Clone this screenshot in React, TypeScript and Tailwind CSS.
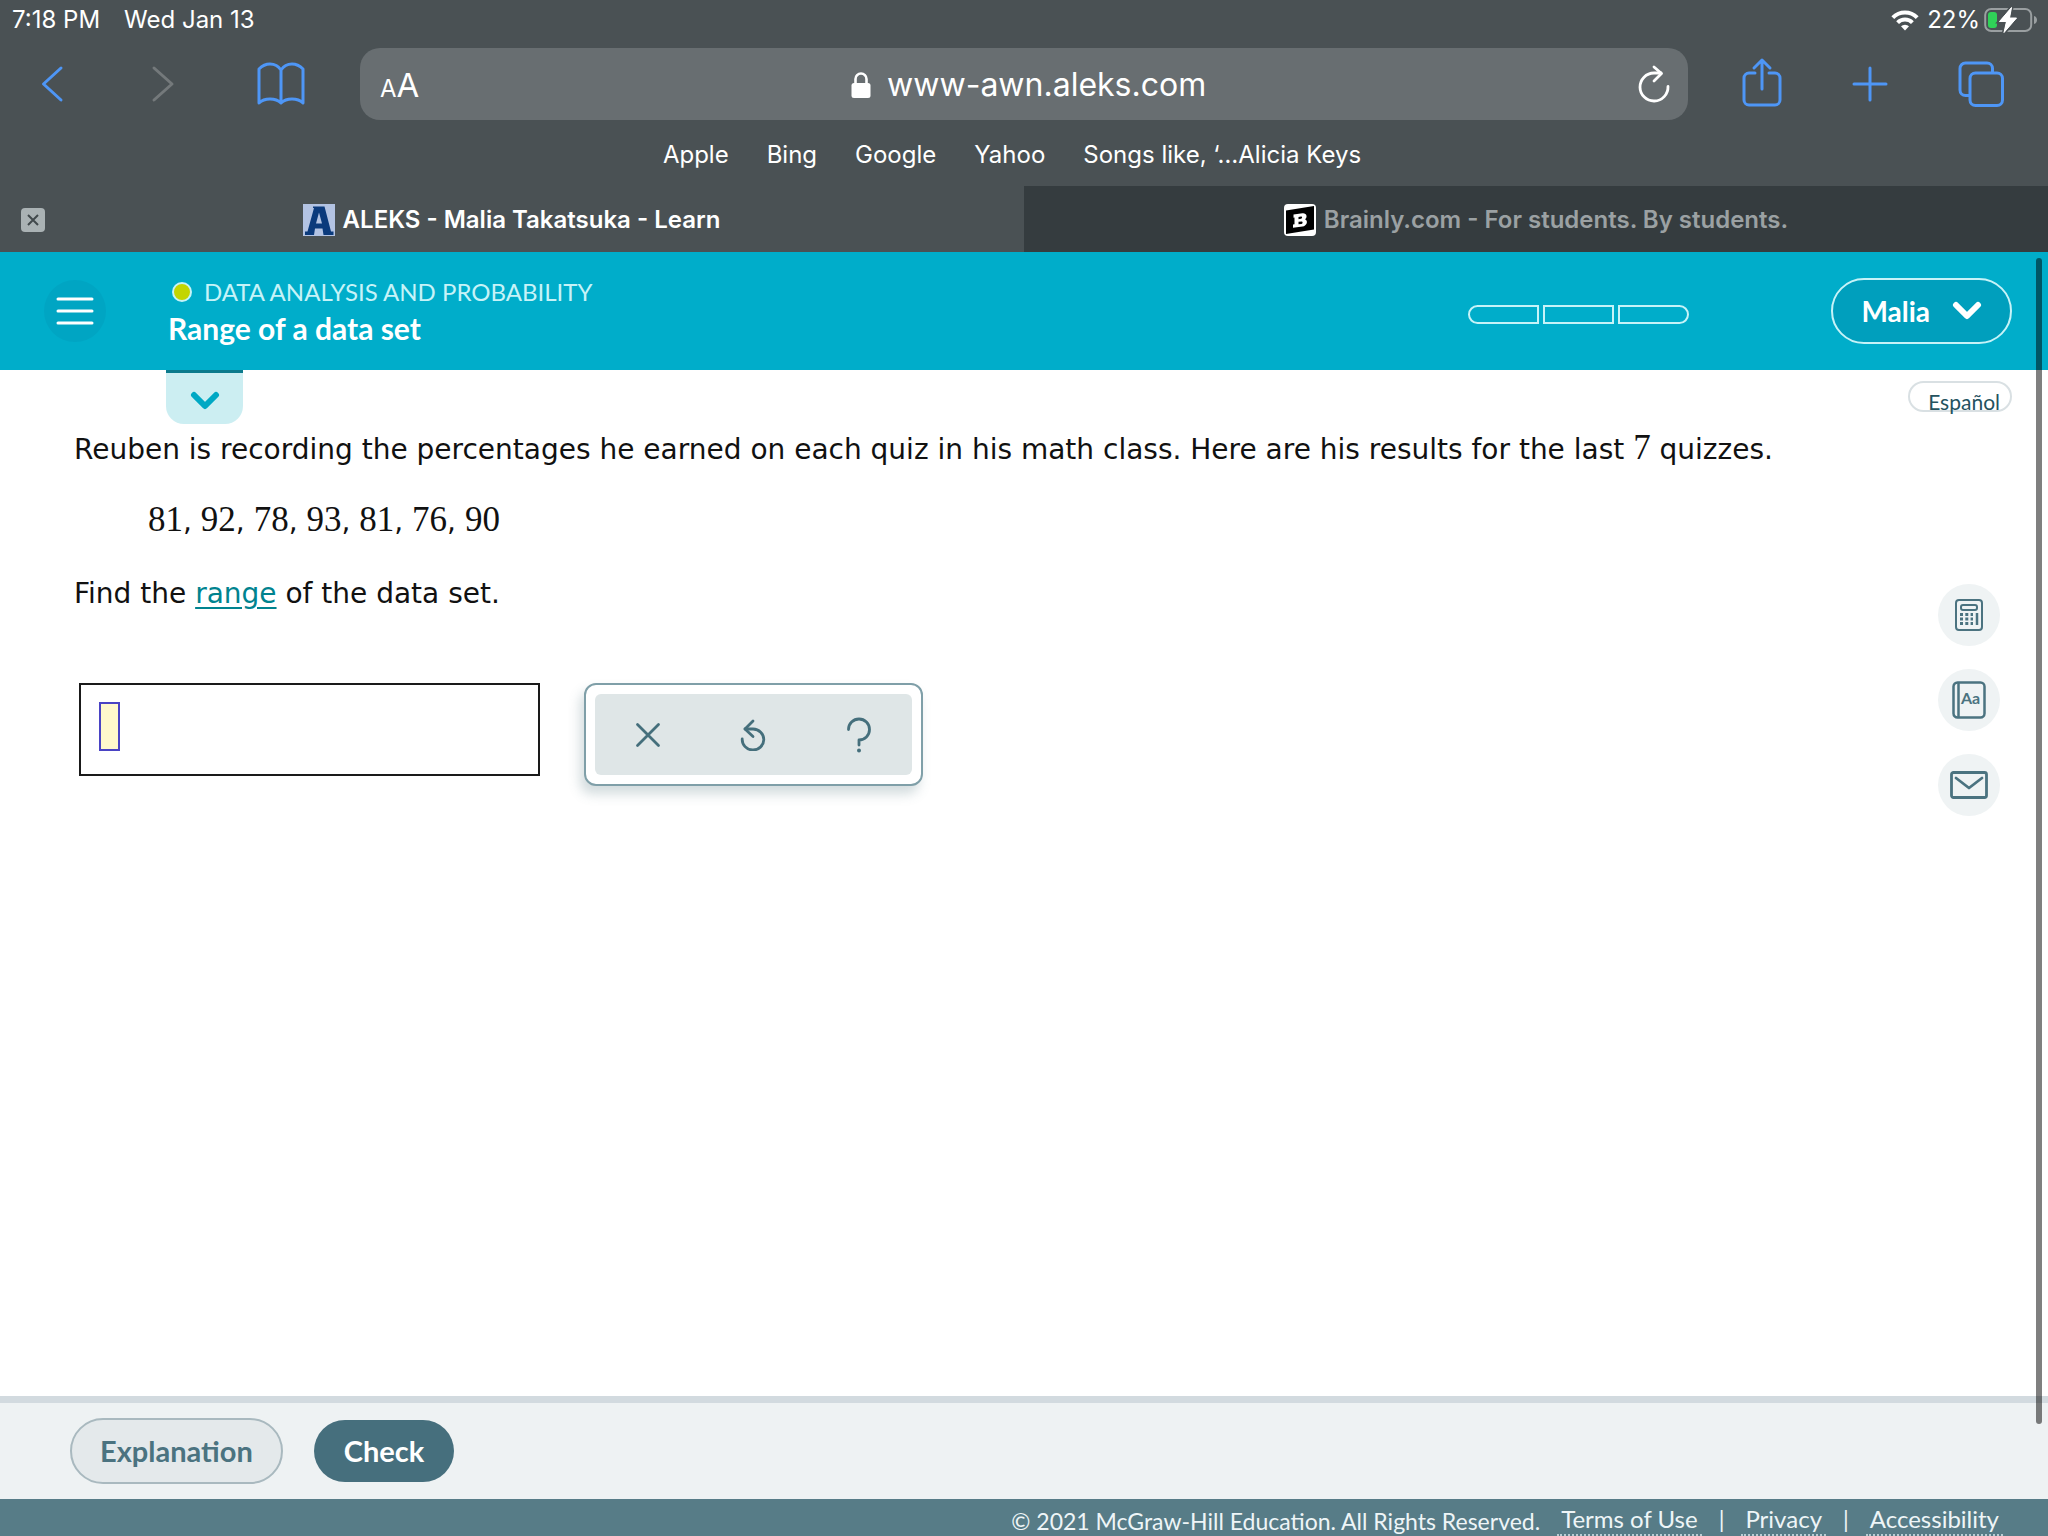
import React from 'react';

const bookmarks = ['Apple', 'Bing', 'Google', 'Yahoo', 'Songs like, ‘…Alicia Keys'];
const results = [81, 92, 78, 93, 81, 76, 90];

function StatusBar() {
  return (
    <div className="flex h-10 items-center justify-between pr-[10px] pl-3 text-2xl text-white">
      <div className="flex gap-6">
        <span>7:18 PM</span>
        <span>Wed Jan 13</span>
      </div>
      <div className="flex items-center gap-1">
        <svg className="mr-1" width="28" height="21" viewBox="0 0 28 21" fill="none" stroke="white" strokeWidth="4">
          <path d="M1.8 7.6a17.3 17.3 0 0 1 24.4 0" />
          <path d="M6.6 12.6a10.5 10.5 0 0 1 14.8 0" />
          <path d="M14 20.5l-4-4.2a5.8 5.8 0 0 1 8 0z" fill="white" stroke="none" />
        </svg>
        <span>22%</span>
        <svg width="54" height="26" viewBox="0 0 54 26" fill="none">
          <rect x="1.2" y="2" width="46" height="22" rx="6" stroke="#9a9fa1" strokeWidth="2" />
          <rect x="4" y="5" width="9" height="16" rx="3" fill="#30d158" />
          <path d="M50 9c4 1 4 7 0 8z" fill="#9a9fa1" />
          <path d="M27.500 0.500L15.500 14.500H22.500L20 25.500L32.500 11H25.500z" fill="white" stroke="#4a5154" strokeWidth="4" paintOrder="stroke" />
          <path d="M27.500 0.500L15.500 14.500H22.500L20 25.500L32.500 11H25.500z" fill="white" stroke="white" strokeWidth="1" strokeLinejoin="round" />
        </svg>
      </div>
    </div>
  );
}

function Toolbar() {
  return (
    <div className="flex h-[88px] items-center text-[#4e96f6]">
      <div className="flex w-[360px] shrink-0 items-center pl-10">
        <button aria-label="Back">
          <svg width="26" height="40" viewBox="0 0 26 40" fill="none" stroke="currentColor" strokeWidth="3" strokeLinecap="round" strokeLinejoin="round">
            <path d="M21 4L3.500 20L21 36" />
          </svg>
        </button>
        <button aria-label="Forward" className="ml-[84px] text-[#74797b]">
          <svg width="26" height="40" viewBox="0 0 26 40" fill="none" stroke="currentColor" strokeWidth="3" strokeLinecap="round" strokeLinejoin="round">
            <path d="M4 4L22 20L4 36" />
          </svg>
        </button>
        <button aria-label="Bookmarks" className="ml-[81px]">
          <svg width="48" height="44" viewBox="0 0 48 44" fill="none" stroke="currentColor" strokeWidth="3" strokeLinejoin="round">
            <path d="M24 8C21 3.500 17 2 13 2S5 4 2 7V41c3-3 6.500-4 11-4s8.500 1.500 11 4c2.500-2.500 6.500-4 11-4s8 1 11 4V7C43 4 39 2 35 2S27 3.500 24 8zV41" />
          </svg>
        </button>
      </div>

      <div className="flex h-[72px] flex-1 items-center justify-between rounded-[20px] bg-[#686e71] pr-[18px] pl-5 text-white">
        <button aria-label="Text size" className="flex items-baseline pt-1">
          <span className="text-2xl">A</span>
          <span className="text-[33px]">A</span>
        </button>
        <div className="flex items-center gap-4 pt-[2px]">
          <svg width="20" height="28" viewBox="0 0 20 28">
            <path d="M4.500 13V8a5.500 5.500 0 0 1 11 0v5" fill="none" stroke="white" strokeWidth="2.600" />
            <rect x="0.500" y="12" width="19" height="15" rx="2.500" fill="white" />
          </svg>
          <span className="text-[32px]">www-awn.aleks.com</span>
        </div>
        <button aria-label="Reload">
          <svg width="32" height="40" viewBox="0 0 32 40" fill="none" stroke="white" strokeWidth="2.800" strokeLinecap="round" strokeLinejoin="round">
            <path d="M30 22.500A14 14 0 1 1 16 9h7" />
            <path d="M16 3l7.500 6.500L16 17" />
          </svg>
        </button>
      </div>

      <div className="flex w-[360px] shrink-0 items-center justify-between pr-11 pl-[54px]">
        <button aria-label="Share" className="pb-1">
          <svg width="40" height="50" viewBox="0 0 40 50" fill="none" stroke="currentColor" strokeWidth="3" strokeLinecap="round" strokeLinejoin="round">
            <path d="M13 16H7a5 5 0 0 0-5 5V43a5 5 0 0 0 5 5H33a5 5 0 0 0 5-5V21a5 5 0 0 0-5-5H27" />
            <path d="M20 32V3M12 11l8-8 8 8" />
          </svg>
        </button>
        <button aria-label="New tab">
          <svg width="36" height="36" viewBox="0 0 36 36" stroke="currentColor" strokeWidth="3" strokeLinecap="round">
            <path d="M18 2V34M2 18H34" />
          </svg>
        </button>
        <button aria-label="All tabs">
          <svg width="46" height="46" viewBox="0 0 46 46" fill="none" stroke="currentColor" strokeWidth="3">
            <path d="M12 34.500H7.500a5.500 5.500 0 0 1-5.500-5.500V7.500A5.500 5.500 0 0 1 7.500 2H29a5.500 5.500 0 0 1 5.500 5.500V12" />
            <rect x="12" y="12" width="32.500" height="32.500" rx="5.500" />
          </svg>
        </button>
      </div>
    </div>
  );
}

function TabStrip() {
  return (
    <div className="grid h-[66px] grid-cols-2 text-2xl font-semibold">
      <div className="flex items-center pt-[2px] pr-5 pl-[21px]">
        <button aria-label="Close tab" className="flex h-6 w-6 items-center justify-center rounded-[4px] bg-[#aab2b4]">
          <svg width="12" height="12" viewBox="0 0 12 12" stroke="#41494c" strokeWidth="2">
            <path d="M1 1L11 11M11 1L1 11" />
          </svg>
        </button>
        <button className="flex flex-1 items-center justify-center gap-2 pr-[26px] text-white">
          <svg width="32" height="32" viewBox="0 0 32 32">
            <rect width="32" height="32" fill="#b3c3e3" />
            <path d="M2 31V27.500H4.500L11 4H10V2.500H21.500L28 27.500H30.500V31H20.500L19.500 24.500H12L11 31zM13 19.500H19L16 8.500z" fill="#0b3a7c" fillRule="evenodd" />
          </svg>
          ALEKS - Malia Takatsuka - Learn
        </button>
      </div>
      <button className="flex items-center justify-center gap-2 bg-[#353c3f] pt-[2px] text-[#9ba1a3]">
        <svg width="32" height="32" viewBox="0 0 32 32">
          <rect width="32" height="32" rx="4" fill="white" />
          <path d="M2 6.500L30 2V25.500L2 30z" fill="black" />
          <path d="M9.500 10.500l9-1.300c4-.5 5.500 3.800 2.500 6 3.500 1.500 2 6.700-2.500 7.300l-9.500 1.300V20.500l1.500-.3V13.600l-1 .1zM14.500 13v2.200l2.500-.4c1.500-.3 1.500-2.400 0-2.200zM14.500 17.800v2.500l3-.4c1.500-.3 1.500-2.700 0-2.500z" fill="white" fillRule="evenodd" />
        </svg>
        Brainly.com - For students. By students.
      </button>
    </div>
  );
}

function Browser() {
  return (
    <div className="bg-[#4a5154] font-['Inter',sans-serif]">
      <StatusBar />
      <Toolbar />
      <nav className="flex h-[58px] items-center justify-center gap-[38px] pr-6 pb-1 text-2xl text-white">
        {bookmarks.map((name) => (
          <a key={name} href="#">{name}</a>
        ))}
      </nav>
      <TabStrip />
    </div>
  );
}

function Chevron() {
  return (
    <svg width="30" height="20" viewBox="0 0 30 20" fill="none" stroke="currentColor" strokeWidth="6" strokeLinecap="round" strokeLinejoin="round">
      <path d="M4 4L15 15L26 4" />
    </svg>
  );
}

function LessonHeader() {
  return (
    <header className="flex h-[118px] items-center bg-[#00adca] pr-9 pl-11 text-white">
      <button aria-label="Menu" className="flex h-[62px] w-[62px] items-center justify-center rounded-full bg-[#00a5c3]">
        <svg width="38" height="30" viewBox="0 0 38 30" stroke="white" strokeWidth="3" strokeLinecap="round">
          <path d="M2 3H36M2 15H36M2 27H36" />
        </svg>
      </button>
      <div className="ml-[62px] flex-1 pt-[2px]">
        <div className="flex items-center gap-3 pl-1 text-2xl leading-8 text-[#c6f3f8]">
          <span className="h-5 w-5 rounded-full border-2 border-[#c6f3f8] bg-[#c3d500]" />
          DATA ANALYSIS AND PROBABILITY
        </div>
        <h1 className="text-[30px] leading-10 font-bold">Range of a data set</h1>
      </div>
      <div className="mt-[6px] mr-[142px] flex gap-1" role="img" aria-label="Progress 0 of 3">
        <span className="h-[19px] w-[71px] rounded-l-full border-2 border-[#c6f3f8]" />
        <span className="h-[19px] w-[71px] border-2 border-[#c6f3f8]" />
        <span className="h-[19px] w-[71px] rounded-r-full border-2 border-[#c6f3f8]" />
      </div>
      <button className="flex h-[66px] items-center gap-[22px] rounded-full border-2 border-[#c6f3f8] bg-[#009fbd] px-7 text-[28px] font-bold">
        Malia
        <Chevron />
      </button>
    </header>
  );
}

function SideTools() {
  const round = 'flex h-[62px] w-[62px] items-center justify-center rounded-full bg-[#eff3f4]';
  return (
    <div className="flex flex-col gap-[23px] text-[#4b7380]">
      <button aria-label="Calculator" className={round}>
        <svg width="28" height="32" viewBox="0 0 28 32" fill="none" stroke="currentColor" strokeWidth="2">
          <rect x="1" y="1" width="26" height="30" rx="3" />
          <rect x="6" y="6" width="16" height="5" rx="2" />
          <path d="M5 15.500h13M5 20h13M5 24.500h13" strokeWidth="3" strokeDasharray="3 2.300" />
          <path d="M22 14v12" strokeWidth="2.500" />
        </svg>
      </button>
      <button aria-label="Dictionary" className={round}>
        <svg width="34" height="38" viewBox="0 0 34 38" fill="none" stroke="currentColor" strokeWidth="2.500">
          <rect x="1.500" y="1.500" width="31" height="35" rx="4" />
          <path d="M6.500 1.500v35" />
          <text x="9" y="23" fontSize="16" fontWeight="700" fill="currentColor" stroke="none">Aa</text>
        </svg>
      </button>
      <button aria-label="Message" className={round}>
        <svg width="38" height="28" viewBox="0 0 38 28" fill="none" stroke="currentColor" strokeWidth="2.800" strokeLinecap="round" strokeLinejoin="round">
          <rect x="1.500" y="1.500" width="35" height="25" rx="2" />
          <path d="M6 7l13 10L32 7" />
        </svg>
      </button>
    </div>
  );
}

function AnswerArea() {
  return (
    <div className="flex items-start gap-11 pl-[5px]">
      <div className="flex h-[93px] w-[461px] items-start border-2 border-[#1a1a1a] pt-[17px] pl-[18px]">
        <input aria-label="Answer" className="h-[49px] w-[21px] border-2 border-[#4a43c4] bg-[#fff8cc]" />
      </div>
      <div className="w-[339px] rounded-xl border-2 border-[#7f9fa8] bg-white p-[9px] shadow-[-4px_8px_12px_rgba(80,115,125,0.25)]">
        <div className="grid h-[81px] grid-cols-3 items-center justify-items-center rounded-md bg-[#dfe6e7] text-[#456f7c]">
          <button aria-label="Clear">
            <svg width="26" height="26" viewBox="0 0 26 26" stroke="currentColor" strokeWidth="2.800" strokeLinecap="round">
              <path d="M2.500 2.500L23.500 23.500M23.500 2.500L2.500 23.500" />
            </svg>
          </button>
          <button aria-label="Undo">
            <svg width="28" height="32" viewBox="0 0 28 32" fill="none" stroke="currentColor" strokeWidth="2.800" strokeLinecap="round" strokeLinejoin="round">
              <path d="M14 2L6 10L14 17.500" />
              <path d="M6 10H14A10.800 10.500 0 1 1 3.200 20" />
            </svg>
          </button>
          <button aria-label="Help">
            <svg width="28" height="36" viewBox="0 0 28 36" fill="none" stroke="currentColor" strokeWidth="2.800" strokeLinecap="round" strokeLinejoin="round">
              <path d="M3.500 12.500A10.500 10.500 0 1 1 14 23v5" />
              <circle cx="14" cy="33.500" r="2" fill="currentColor" stroke="none" />
            </svg>
          </button>
        </div>
      </div>
    </div>
  );
}

function Question() {
  return (
    <main className="flex flex-1 justify-between pr-9 pl-[74px]">
      <div className="font-['DejaVu_Sans',sans-serif] text-[28px] leading-[72px] text-[#111]">
        <button aria-label="Show lesson" className="ml-[92px] flex h-[54px] w-[77px] items-center justify-center rounded-b-[18px] border-t-[3px] border-[#0b7a8c] bg-[#cceef2] pt-1 text-[#00a8c4]">
          <Chevron />
        </button>
        <p className="-mt-[10px]">
          Reuben is recording the percentages he earned on each quiz in his math class. Here are his results for the last{' '}
          <span className="font-['Liberation_Serif',serif] text-[35px] leading-none">7</span> quizzes.
        </p>
        <p className="pl-[74px]">
          {results.map((value, i) => (
            <React.Fragment key={i}>
              <span className="font-['Liberation_Serif',serif] text-[35px] leading-none">{value}</span>
              {i < results.length - 1 && ', '}
            </React.Fragment>
          ))}
        </p>
        <p className="mb-[53px]">
          Find the <a href="#" className="text-[#00838f] underline underline-offset-4">range</a> of the data set.
        </p>
        <AnswerArea />
      </div>
      <div className="flex flex-col items-end pt-[11px]">
        <button className="mb-[172px] h-[31px] rounded-full border-2 border-[#d9e0e3] pt-[7px] pr-[10px] pl-[18px] text-[21px] leading-6 text-[#24525f]">
          Español
        </button>
        <div className="pr-3">
          <SideTools />
        </div>
      </div>
    </main>
  );
}

function Footer() {
  const link = 'border-b-2 border-dotted border-[#b9cdd3] px-1 text-2xl leading-[30px]';
  return (
    <footer>
      <div className="flex h-[103px] items-center gap-[31px] border-t-[7px] border-[#d2dadf] bg-[#eef2f3] pl-[70px] text-[29px] font-bold">
        <button className="h-[66px] rounded-full border-2 border-[#a9b9bf] bg-[#e4e9eb] px-7 text-[#4b7380]">Explanation</button>
        <button className="h-[62px] rounded-full bg-[#466f7d] px-[30px] text-white">Check</button>
      </div>
      <div className="flex h-[37px] items-end justify-end gap-[17px] bg-[#577c87] pr-[45px] text-[23px] leading-[30px] text-[#eef5f7]">
        <span>© 2021 McGraw-Hill Education. All Rights Reserved.</span>
        <a href="#" className={link}>Terms of Use</a>
        <span className="pb-[2px]">|</span>
        <a href="#" className={link}>Privacy</a>
        <span className="pb-[2px]">|</span>
        <a href="#" className={link}>Accessibility</a>
      </div>
    </footer>
  );
}

export default function App() {
  return (
    <div className="relative flex min-h-screen flex-col bg-white font-['Lato',sans-serif]">
      <Browser />
      <LessonHeader />
      <Question />
      <Footer />
      {/* page scroll indicator */}
      <div className="absolute top-[258px] right-[6px] bottom-28 w-[6px] rounded-full bg-black/50" />
    </div>
  );
}
